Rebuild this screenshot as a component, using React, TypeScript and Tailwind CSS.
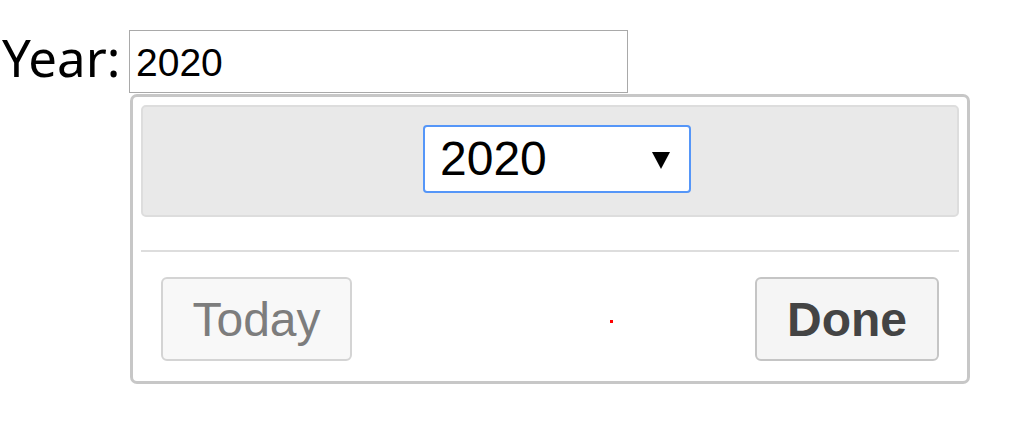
export default function App() {
  return (
    <div className="min-h-[423px] bg-white pt-[30px] pl-[2px]" style={{ fontFamily: '"Liberation Sans", Arial, sans-serif' }}>
      <div className="flex items-start">
        <label
          className="w-[127px] -mt-[1px] text-[51px] leading-[56px] text-black"
          style={{ fontFamily: '"Noto Sans", sans-serif' }}
        >
          Year:
        </label>
        <div className="flex flex-col">
          <div className="flex h-[63px] w-[499px] items-center border border-[#a9a9a9] bg-white pl-[6px] pt-[4px] text-[39px] text-black">
            2020
          </div>

          {/* year picker popup */}
          <div className="relative ml-[1px] mt-[1px] flex h-[290px] w-[840px] flex-col rounded-[7px] border-[3px] border-[#c7c7c7] bg-white p-[8px]">
            <div className="h-[112px] rounded-[5px] border-2 border-[#dddddd] bg-[#e9e9e9] pl-[280px] pt-[18px]">
              <div className="flex h-[68px] w-[268px] items-center justify-between rounded-[4px] border-2 border-[#5596f8] bg-white pl-[15px] pr-[19px]">
                <span className="text-[48px] leading-none text-black">2020</span>
                <svg width="18" height="17" viewBox="0 0 18 17" className="mt-[2px]">
                  <polygon points="0,0 18,0 9,17" fill="#000" />
                </svg>
              </div>
            </div>

            <div className="mt-[33px] h-[2px] bg-[#dddddd]" />

            <div className="mt-[25px] flex items-center justify-between px-[20px]">
              <button className="h-[84px] w-[191px] rounded-[6px] border-2 border-[#d4d4d4] bg-[#f8f8f8] pt-[2px] text-[48px] text-[#7d7d7d]">
                Today
              </button>
              <button className="h-[84px] w-[184px] rounded-[6px] border-2 border-[#c5c5c5] bg-[#f5f5f5] pt-[2px] text-[48px] font-bold text-[#444444]">
                Done
              </button>
            </div>

            <span className="absolute left-[477px] top-[223px] h-[3px] w-[3px] bg-[#ff0000]" />
          </div>
        </div>
      </div>
    </div>
  );
}
